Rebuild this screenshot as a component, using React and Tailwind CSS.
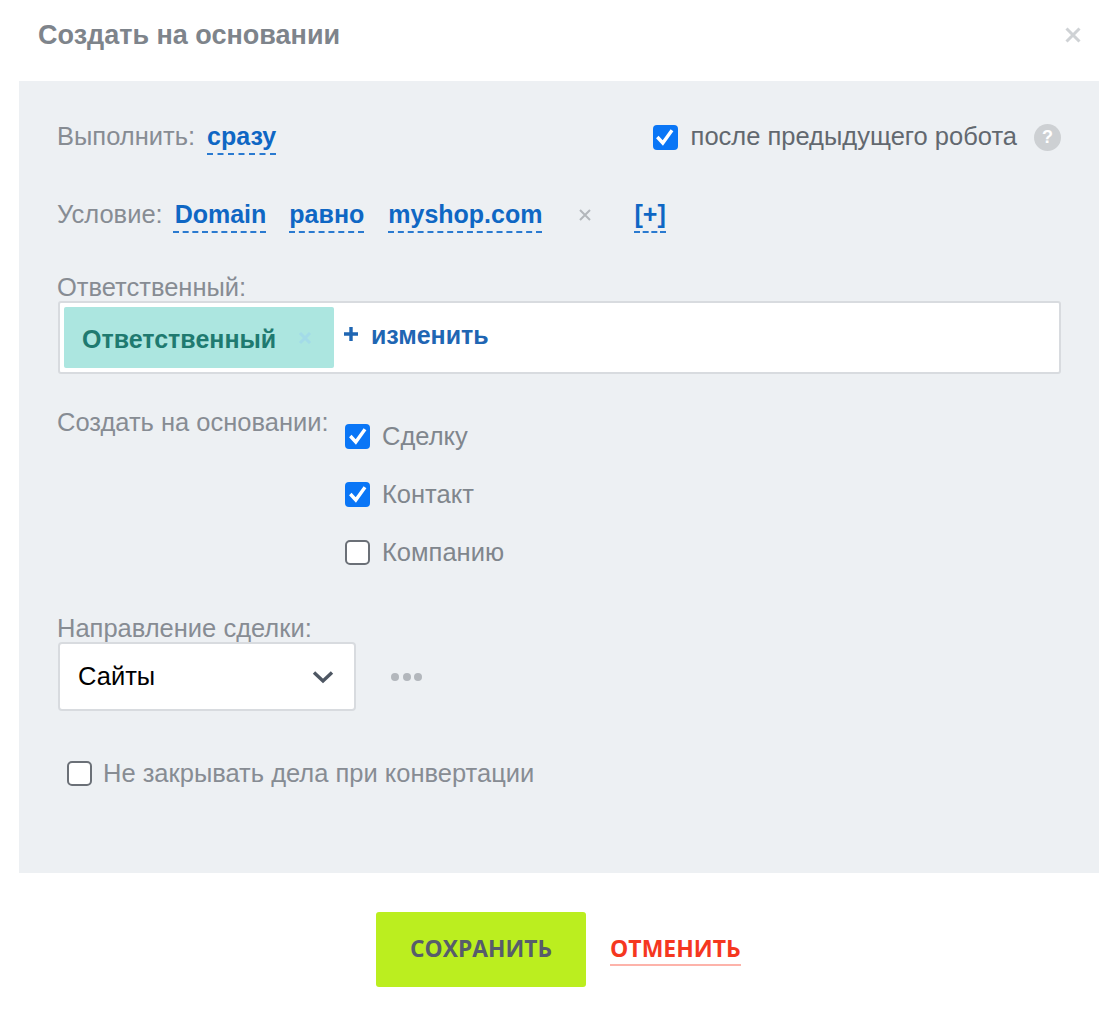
import React from "react";

function Check({ checked, className = "" }) {
  if (!checked) {
    return <span className={"block w-[25px] h-[25px] shrink-0 rounded-[5px] border-2 border-[#6b7077] bg-white " + className} />;
  }
  return (
    <span className={"flex items-center justify-center w-[25px] h-[25px] shrink-0 rounded-[4px] bg-[#0a76f6] " + className}>
      <svg width="18" height="18" viewBox="0 0 18 18" fill="none">
        <path d="M1.3 9 L6.8 15 L16 2.2" stroke="#fff" strokeWidth="3.4" />
      </svg>
    </span>
  );
}

function Dashed({ children, className = "" }) {
  return (
    <span className={"font-bold text-[25px] text-[#0f67c4] border-b-2 border-dashed border-[#2a7ad0] leading-[28px] pb-[3px] " + className}>
      {children}
    </span>
  );
}

function Option({ checked, label }) {
  return (
    <div className="flex items-center h-[58px] gap-[12px]">
      <Check checked={checked} />
      <span className="text-[#80868d]">{label}</span>
    </div>
  );
}

export default function App() {
  return (
    <div className="w-[1111px] h-[1024px] bg-white font-['Liberation_Sans',sans-serif] text-[25.5px] overflow-hidden">
      <div className="h-[81px] pl-[38px] pr-[30px] pt-[18px] flex justify-between items-start">
        <h1 className="text-[27px] font-bold text-[#7e848b] leading-[34px]">Создать на основании</h1>
        <svg width="16" height="16" viewBox="0 0 16 16" className="mt-[9px]">
          <path d="M1.5 1.5 L14.5 14.5 M14.5 1.5 L1.5 14.5" stroke="#cfd2d5" strokeWidth="3" />
        </svg>
      </div>

      <div className="ml-[19px] w-[1080px] h-[792px] bg-[#edf0f3] pl-[38px] pr-[38px] pt-[36px]">
        <div className="flex justify-between items-center h-[40px]">
          <div className="flex items-center gap-[12px]">
            <span className="text-[#878c93] pb-[2px]">Выполнить:</span>
            <Dashed className="mt-[2px]">сразу</Dashed>
          </div>
          <div className="flex items-center">
            <Check checked className="mr-[13px]" />
            <span className="text-[#62686f] pb-[2px]">после предыдущего робота</span>
            <span className="ml-[17px] w-[27px] h-[27px] rounded-full bg-[#cdd0d3] text-white text-[18px] font-bold flex items-center justify-center">?</span>
          </div>
        </div>

        <div className="flex items-center h-[40px] mt-[38px]">
          <span className="text-[#878c93] mr-[10px] pb-[2px]">Условие:</span>
          <Dashed className="mt-[2px] pl-[2px]">Domain</Dashed>
          <Dashed className="mt-[2px] ml-[23px]">равно</Dashed>
          <Dashed className="mt-[2px] ml-[24px]">myshop.com</Dashed>
          <svg width="12" height="12" viewBox="0 0 12 12" className="ml-[37px]">
            <path d="M1 1 L11 11 M11 1 L1 11" stroke="#b3b7bb" strokeWidth="2" />
          </svg>
          <Dashed className="mt-[2px] ml-[43px]">[+]</Dashed>
        </div>

        <div className="text-[#878c93] leading-[27px] mt-[39px]">Ответственный:</div>
        <div className="ml-px h-[73px] bg-white border-2 border-[#d8dbdf] rounded-[3px] flex items-start pl-[4px] pt-[4px]">
          <div className="w-[270px] h-[61px] bg-[#ace6e0] rounded-[2px] flex items-center pl-[18px]">
            <span className="font-bold text-[25px] text-[#1f7a70] pt-[4px]">Ответственный</span>
            <svg width="14" height="14" viewBox="0 0 14 14" className="ml-[22px]">
              <path d="M2 2 L12 12 M12 2 L2 12" stroke="#a3dbe8" strokeWidth="3" />
            </svg>
          </div>
          <svg width="16" height="16" viewBox="0 0 16 16" className="ml-[9px] mt-[19px]">
            <path d="M8 1 V15 M1 8 H15" stroke="#1f66b3" strokeWidth="3.4" />
          </svg>
          <span className="font-bold text-[25px] text-[#1f66b3] ml-[12px] mt-[14px] leading-[28px]">изменить</span>
        </div>

        <div className="flex mt-[19px]">
          <span className="text-[#878c93] leading-[28px] pt-[15px] w-[288px]">Создать на основании:</span>
          <div className="pt-[14px]">
            <Option checked label="Сделку" />
            <Option checked label="Контакт" />
            <Option label="Компанию" />
          </div>
        </div>

        <div className="text-[#878c93] leading-[27px] mt-[34px]">Направление сделки:</div>
        <div className="flex items-center">
          <div className="ml-px w-[298px] h-[69px] bg-white border-2 border-[#d8dbdf] rounded-[4px] flex items-center justify-between pl-[18px] pr-[20px]">
            <span className="text-black">Сайты</span>
            <svg width="22" height="14" viewBox="0 0 22 14" fill="none">
              <path d="M2 2.5 L11 11 L20 2.5" stroke="#4e5763" strokeWidth="3.4" />
            </svg>
          </div>
          <div className="flex gap-[3.5px] ml-[35px]">
            <span className="w-[8px] h-[8px] rounded-full bg-[#b3b7bc]" />
            <span className="w-[8px] h-[8px] rounded-full bg-[#b3b7bc]" />
            <span className="w-[8px] h-[8px] rounded-full bg-[#b3b7bc]" />
          </div>
        </div>

        <div className="flex items-center mt-[43px] pl-[10px] gap-[11px]">
          <Check />
          <span className="text-[#878c93]">Не закрывать дела при конвертации</span>
        </div>
      </div>

      <div className="flex items-start pl-[376px] pt-[39px]">
        <button className="w-[210px] h-[75px] rounded-[3px] bg-[#bbee1f] text-[#575c6b] font-['Open_Sans',sans-serif] font-bold text-[22.8px]">СОХРАНИТЬ</button>
        <span className="ml-[24px] mt-[20px] text-[#f5371f] font-['Open_Sans',sans-serif] font-bold text-[23px] leading-[32px] border-b-2 border-[#fdb3aa]">ОТМЕНИТЬ</span>
      </div>
    </div>
  );
}
